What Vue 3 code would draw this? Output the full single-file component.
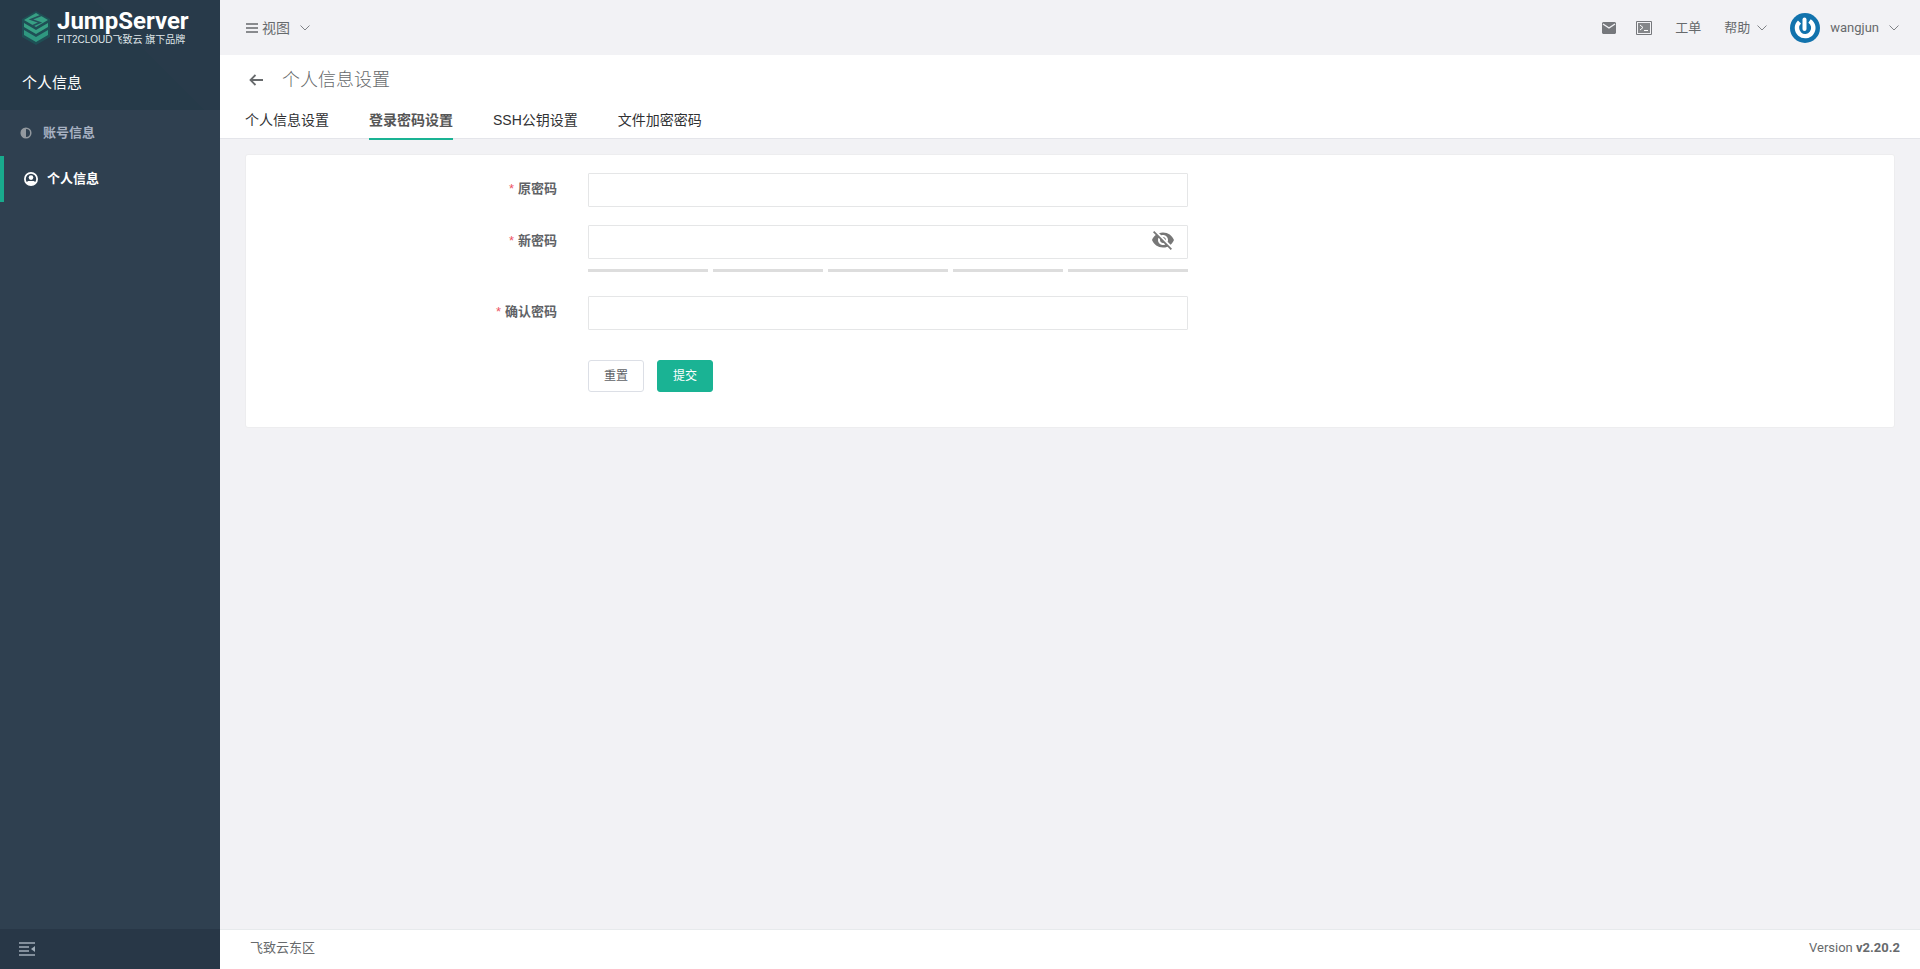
<script setup>
import { ref } from 'vue'

const tabs = ['个人信息设置', '登录密码设置', 'SSH公钥设置', '文件加密密码']
const activeTab = ref(1)
const showPassword = ref(false)
const form = ref({ current: '', next: '', confirm: '' })

function reset() {
  form.value = { current: '', next: '', confirm: '' }
}
</script>

<template>
  <div class="layout">
    <aside class="sidebar">
      <div class="brand-area">
        <a class="brand" href="#">
          <svg class="brand-mark" viewBox="0 0 30 36" aria-hidden="true">
            <path d="M15 1 29 9v18L15 35 1 27V9z" fill="#1f4f55" />
            <path d="M15 3 27 10 15 17 3 10z" fill="#37a084" />
            <path d="M20 5.500 10 9.500 19 12.500 11 16" fill="none" stroke="#25505a" stroke-width="1.600" />
            <path d="M3 13l12 7 12-7v4l-12 7-12-7z" fill="#37a084" />
            <path d="M3 20l12 7 12-7v5l-12 7-12-7z" fill="#2f9880" />
          </svg>
          <span class="brand-text">
            <strong>JumpServer</strong>
            <small>FIT2CLOUD飞致云 旗下品牌</small>
          </span>
        </a>
        <div class="sidebar-title">个人信息</div>
      </div>
      <nav class="menu">
        <a class="menu-item" href="#">
          <svg class="icon-half" viewBox="0 0 12 12" aria-hidden="true">
            <circle cx="6" cy="6" r="4.800" fill="none" stroke="currentColor" stroke-width="1.500" />
            <path d="M6 1a5 5 0 0 0 0 10z" fill="currentColor" />
          </svg>
          账号信息
        </a>
        <a class="menu-item active" href="#">
          <svg class="icon-user" viewBox="0 0 14 14" aria-hidden="true">
            <circle cx="7" cy="7" r="6.100" fill="none" stroke="currentColor" stroke-width="1.800" />
            <circle cx="7" cy="5.600" r="2.300" fill="currentColor" />
            <path d="M2 11C3 9.400 4 9 5 9h4c1 0 2 .4 3 2L9.500 13h-5z" fill="currentColor" />
          </svg>
          个人信息
        </a>
      </nav>
      <button class="collapse" type="button" aria-label="收起菜单">
        <svg viewBox="0 0 16 14" aria-hidden="true">
          <path d="M0 1h16M0 5h10M0 9h10M0 13h16" stroke="currentColor" stroke-width="1.600" />
          <path d="M16 4v6l-4-3z" fill="currentColor" />
        </svg>
      </button>
    </aside>

    <div class="main">
      <header class="topbar">
        <button class="nav-button view-button" type="button">
          <svg class="icon-bars" viewBox="0 0 12 12" aria-hidden="true">
            <path d="M0 2h12M0 6h12M0 10h12" stroke="currentColor" stroke-width="1.400" />
          </svg>
          <span>视图</span>
          <svg class="chevron" viewBox="0 0 10 6" aria-hidden="true"><path d="M.5.500 5 5 9.500.500" /></svg>
        </button>
        <div class="topbar-right">
          <div class="icon-group">
            <button class="nav-button" type="button" aria-label="消息">
              <svg class="icon-mail" viewBox="0 0 14 12" aria-hidden="true">
                <path d="M1 0h12l1 1v10l-1 1H1l-1-1V1z" fill="#76787c" />
                <path d="M1 2l6 4 6-4" fill="none" stroke="#f2f2f5" stroke-width="1.400" />
              </svg>
            </button>
            <button class="nav-button" type="button" aria-label="终端">
              <svg class="icon-terminal" viewBox="0 0 16 14" aria-hidden="true">
                <path d="M.5.500h15v13H.5z" fill="#f2f2f5" stroke="#76787c" />
                <path d="M2 2h12v10H2z" fill="#85878a" />
                <path d="M4 4l3 2.500L4 9M8 9.500h4" fill="none" stroke="#fff" />
              </svg>
            </button>
          </div>
          <a class="nav-button" href="#">工单</a>
          <button class="nav-button help" type="button">
            帮助
            <svg class="chevron" viewBox="0 0 10 6" aria-hidden="true"><path d="M.5.500 5 5 9.500.500" /></svg>
          </button>
          <button class="nav-button user" type="button">
            <svg class="avatar" viewBox="0 0 30 30" aria-hidden="true">
              <circle cx="15" cy="15" r="15" fill="#1273ad" />
              <path d="M9.500 9A8.200 8.200 0 1 0 19.500 8" fill="none" stroke="#fff" stroke-width="4.400" />
              <path d="M14.500 6.500V16" stroke="#fff" stroke-width="4" stroke-linecap="round" />
            </svg>
            <span>wangjun</span>
            <svg class="chevron" viewBox="0 0 10 6" aria-hidden="true"><path d="M.5.500 5 5 9.500.500" /></svg>
          </button>
        </div>
      </header>

      <section class="page-heading">
        <div class="title-row">
          <button class="back" type="button" aria-label="返回">
            <svg viewBox="0 0 14 12" aria-hidden="true">
              <path d="M14 6H1.500M6.500 1l-5 5 5 5" fill="none" stroke="currentColor" stroke-width="1.800" />
            </svg>
          </button>
          <h1>个人信息设置</h1>
        </div>
        <nav class="tabs" role="tablist">
          <button
            v-for="(tab, i) in tabs"
            :key="tab"
            type="button"
            role="tab"
            class="tab"
            :class="{ active: i === activeTab }"
            :aria-selected="i === activeTab"
            @click="activeTab = i"
          >{{ tab }}</button>
        </nav>
      </section>

      <main class="content">
        <form class="card" @submit.prevent>
          <label class="label" for="current">原密码</label>
          <input id="current" v-model="form.current" class="field" type="password" />

          <label class="label" for="next">新密码</label>
          <div class="field-group">
            <input id="next" v-model="form.next" class="field" :type="showPassword ? 'text' : 'password'" />
            <button class="eye" type="button" aria-label="显示密码" @click="showPassword = !showPassword">
              <svg viewBox="0 0 24 24" aria-hidden="true">
                <path fill="currentColor" d="M12 7c2.760 0 5 2.240 5 5 0 .650-.130 1.260-.360 1.830l2.920 2.920c1.510-1.260 2.700-2.890 3.430-4.750-1.730-4.390-6-7.500-11-7.500-1.400 0-2.740.250-3.980.700l2.160 2.160C10.740 7.130 11.350 7 12 7zM2 4.270l2.280 2.280.460.460C3.080 8.300 1.780 10.020 1 12c1.730 4.390 6 7.500 11 7.500 1.550 0 3.030-.300 4.380-.840l.420.420L19.730 22 21 20.730 3.270 3 2 4.270zM7.530 9.800l1.550 1.550c-.050.210-.080.430-.080.650 0 1.660 1.340 3 3 3 .220 0 .440-.030.650-.080l1.550 1.550c-.670.330-1.410.530-2.200.530-2.760 0-5-2.240-5-5 0-.790.200-1.530.530-2.200zm4.310-.780l3.150 3.150.020-.160c0-1.660-1.340-3-3-3l-.170.010z" />
              </svg>
            </button>
            <div class="strength"><span v-for="n in 5" :key="n"></span></div>
          </div>

          <label class="label" for="confirm">确认密码</label>
          <input id="confirm" v-model="form.confirm" class="field" type="password" />

          <div class="actions">
            <button class="btn" type="button" @click="reset">重置</button>
            <button class="btn primary" type="submit">提交</button>
          </div>
        </form>
      </main>

      <footer class="footer">
        <span>飞致云东区</span>
        <span class="version">Version <b>v2.20.2</b></span>
      </footer>
    </div>
  </div>
</template>

<style>
body {
  margin: 0;
}
</style>

<style scoped>
.layout {
  display: flex;
  min-height: 100vh;
  font-family: "Liberation Sans", "Noto Sans CJK SC", sans-serif;
  font-size: 13px;
  line-height: 20px;
  color: #676a6c;
  background: #f2f2f5;
}
.layout *,
.layout *::before {
  box-sizing: border-box;
}
button {
  padding: 0;
  border: 0;
  background: none;
  font: inherit;
  color: inherit;
  cursor: pointer;
}
a {
  color: inherit;
  text-decoration: none;
}
svg {
  display: block;
  flex: none;
}

.sidebar {
  display: flex;
  flex-direction: column;
  flex: none;
  width: 220px;
  background: #2f4050;
}
.brand-area {
  height: 110px;
  background: linear-gradient(45deg, #263a49 0 62%, #283a4a 62%);
}
.brand {
  display: flex;
  align-items: center;
  gap: 6px;
  height: 55px;
  padding-left: 21px;
}
.brand-mark {
  width: 30px;
  height: 36px;
}
.brand-text {
  display: flex;
  flex-direction: column;
  color: #fff;
  white-space: nowrap;
}
.brand-text strong {
  font-family: Roboto, sans-serif;
  font-size: 24px;
  font-weight: 700;
  line-height: 24px;
}
.brand-text small {
  font-size: 10px;
  line-height: 14px;
  color: #dfe4e8;
}
.sidebar-title {
  padding: 17px 22px;
  font-size: 15px;
  line-height: 22px;
  color: #fff;
}
.menu {
  flex: 1;
}
.menu-item {
  display: flex;
  align-items: center;
  height: 46px;
  padding-left: 20px;
  gap: 11px;
  font-weight: 700;
  color: #a7b1c2;
}
.menu-item.active {
  border-left: 4px solid #19aa8d;
  gap: 9px;
  color: #fff;
}
.icon-half {
  width: 12px;
  height: 12px;
  color: #93999f;
}
.icon-user {
  width: 14px;
  height: 14px;
}
.collapse {
  display: flex;
  align-items: center;
  height: 40px;
  padding-left: 19px;
  background: #283747;
  color: #a1adb9;
}
.collapse svg {
  width: 16px;
  height: 14px;
}

.main {
  display: flex;
  flex: 1;
  flex-direction: column;
  min-width: 0;
}
.topbar {
  display: flex;
  align-items: center;
  justify-content: space-between;
  height: 55px;
  padding: 0 21px 0 26px;
}
.nav-button {
  display: flex;
  align-items: center;
}
.view-button {
  gap: 4px;
  font-size: 14px;
}
.view-button .chevron {
  margin-left: 6px;
}
.icon-bars {
  width: 12px;
  height: 12px;
}
.chevron {
  width: 10px;
  height: 6px;
  fill: none;
  stroke: #808387;
}
.topbar-right {
  display: flex;
  align-items: center;
  gap: 23px;
}
.icon-group {
  display: flex;
  gap: 20px;
}
.icon-mail {
  width: 14px;
  height: 12px;
}
.icon-terminal {
  width: 16px;
  height: 14px;
}
.help {
  gap: 7px;
}
.user {
  gap: 10px;
  font-family: Roboto, sans-serif;
}
.avatar {
  width: 30px;
  height: 30px;
}

.page-heading {
  padding: 0 25px;
  border-bottom: 1px solid #e4e5ea;
  background: #fff;
}
.title-row {
  display: flex;
  align-items: center;
  gap: 19px;
  height: 50px;
  padding-left: 4px;
}
.back svg {
  width: 14px;
  height: 12px;
}
h1 {
  margin: 0;
  font-size: 18px;
  font-weight: 300;
  line-height: 26px;
}
.tabs {
  display: flex;
  gap: 40px;
  margin-bottom: -2px;
}
.tab {
  height: 35px;
  padding-bottom: 4px;
  border-bottom: 2px solid transparent;
  font-size: 14px;
  color: #303133;
}
.tab.active {
  border-color: #1ab394;
  font-weight: 700;
  color: #555;
}

.content {
  flex: 1;
  padding: 15px 25px;
}
.card {
  display: grid;
  grid-template-columns: 171fr 300fr 353fr;
  row-gap: 18px;
  padding: 18px 0 35px;
  border: 1px solid #ededef;
  border-radius: 3px;
  background: #fff;
}
.label {
  grid-column: 1;
  padding-right: 31px;
  line-height: 32px;
  font-weight: 700;
  text-align: right;
  color: #606266;
}
.label::before {
  content: "*";
  margin-right: 4px;
  font-weight: 400;
  color: #ed5565;
}
.field {
  width: 100%;
  height: 34px;
  padding: 0 12px;
  border: 1px solid #e5e6e7;
  border-radius: 1px;
  background: #fff;
  font: inherit;
  outline: none;
}
.field-group {
  position: relative;
}
.eye {
  position: absolute;
  top: 3px;
  right: 13px;
}
.eye svg {
  width: 24px;
  height: 24px;
  color: #777;
}
.strength {
  display: grid;
  grid-template-columns: 12fr 11fr 12fr 11fr 12fr;
  gap: 5px;
  padding: 10px 0 6px;
}
.strength span {
  height: 3px;
  background: #ddd;
}
.actions {
  display: flex;
  grid-column: 2;
  gap: 13px;
  padding-top: 12px;
}
.btn {
  width: 56px;
  height: 32px;
  border: 1px solid #dcdfe6;
  border-radius: 3px;
  font-size: 12px;
  color: #606266;
}
.btn.primary {
  border-color: #1ab394;
  background: #1ab394;
  color: #fff;
}

.footer {
  display: flex;
  align-items: center;
  justify-content: space-between;
  height: 40px;
  padding: 0 20px 3px 30px;
  border-top: 1px solid #e7eaec;
  background: #fff;
}
.version {
  font-family: Roboto, sans-serif;
}
</style>
